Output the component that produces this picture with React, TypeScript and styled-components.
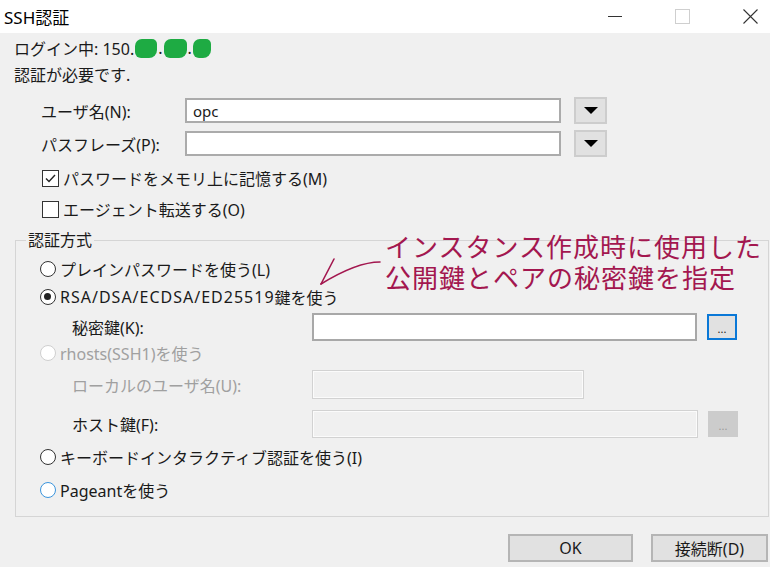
import styled, { createGlobalStyle } from "styled-components";

const GlobalStyle = createGlobalStyle`
  html, body {
    margin: 0;
    padding: 0;
    background: #f0f0f0;
  }
  body {
    font-family: "Noto Sans", "Noto Sans CJK JP", sans-serif;
  }
`;

const App = () => {
  return (
    <>
      <GlobalStyle />
      <Window>
        <TitleBar>
          <Title>SSH認証</Title>
          <Controls>
            <MinimizeIcon />
            <MaximizeIcon />
            <CloseIcon viewBox="0 0 15 15">
              <path d="M0.5 0.5 L14.5 14.5 M14.5 0.5 L0.5 14.5" />
            </CloseIcon>
          </Controls>
        </TitleBar>

        <Body>
          <InfoLine>
            ログイン中: 150.<Blob $w={22} />.<Blob $w={23} />.<Blob $w={18} />
          </InfoLine>
          <InfoLine>認証が必要です.</InfoLine>

          <FieldStack>
            <FieldRow>
              <FieldLabel>ユーザ名(N):</FieldLabel>
              <TextBox>opc</TextBox>
              <DropButton>
                <Triangle />
              </DropButton>
            </FieldRow>
            <FieldRow>
              <FieldLabel>パスフレーズ(P):</FieldLabel>
              <TextBox />
              <DropButton>
                <Triangle />
              </DropButton>
            </FieldRow>
          </FieldStack>

          <CheckStack>
            <CheckRow>
              <CheckBox>
                <svg viewBox="0 0 13 13" width="13" height="13">
                  <path d="M2 6.5 L5 9.5 L11 3" fill="none" stroke="#222" strokeWidth="1.4" />
                </svg>
              </CheckBox>
              パスワードをメモリ上に記憶する(M)
            </CheckRow>
            <CheckRow>
              <CheckBox />
              エージェント転送する(O)
            </CheckRow>
          </CheckStack>

          <Group>
            <Legend>認証方式</Legend>
            <RadioRow $mt={0}>
              <Radio />
              プレインパスワードを使う(L)
            </RadioRow>
            <RadioRow $mt={4}>
              <Radio $checked />
              <Wide>RSA/DSA/ECDSA/ED25519</Wide>鍵を使う
            </RadioRow>
            <KeyRow $mt={4} $h={28}>
              <KeyLabel>秘密鍵(K):</KeyLabel>
              <KeyInput $w={385} />
              <BrowseButton $focused>...</BrowseButton>
            </KeyRow>
            <RadioRow $mt={0} $disabled>
              <Radio $disabled />
              rhosts(SSH1)を使う
            </RadioRow>
            <KeyRow $mt={5} $h={29}>
              <KeyLabel $disabled>ローカルのユーザ名(U):</KeyLabel>
              <KeyInput $w={272} $disabled />
            </KeyRow>
            <KeyRow $mt={11} $h={28}>
              <KeyLabel>ホスト鍵(F):</KeyLabel>
              <KeyInput $w={386} $disabled />
              <BrowseButton $disabled>...</BrowseButton>
            </KeyRow>
            <RadioRow $mt={7}>
              <Radio />
              キーボードインタラクティブ認証を使う(I)
            </RadioRow>
            <RadioRow $mt={9}>
              <Radio $hover />
              Pageantを使う
            </RadioRow>
          </Group>

          <ButtonRow>
            <DialogButton $w={125}>OK</DialogButton>
            <DialogButton $w={117}>接続断(D)</DialogButton>
          </ButtonRow>
        </Body>

        <Note>
          <NoteLine>インスタンス作成時に使用した</NoteLine>
          <NoteLine>公開鍵とペアの秘密鍵を指定</NoteLine>
        </Note>
        <NoteArrow viewBox="0 0 70 40">
          <path d="M65 10 C 50 10, 32 16, 6 32" />
          <path d="M6 32 L 19 7" />
        </NoteArrow>
      </Window>
    </>
  );
};

export default App;

const Window = styled.div`
  position: relative;
  width: 770px;
  height: 567px;
  overflow: hidden;
  background: #f0f0f0;
  color: #1a1a1a;
  font-family: "Noto Sans", "Noto Sans CJK JP", sans-serif;
  font-size: 16px;
`;

const TitleBar = styled.div`
  display: flex;
  align-items: center;
  height: 33px;
  padding-left: 4px;
  background: #fff;
`;

const Title = styled.div`
  flex: 1;
  font-size: 17px;
  color: #000;
`;

const Controls = styled.div`
  display: flex;
  align-items: center;
  gap: 53px;
  padding-right: 12px;
`;

const MinimizeIcon = styled.div`
  width: 14px;
  height: 1px;
  background: #333;
`;

const MaximizeIcon = styled.div`
  width: 13px;
  height: 13px;
  border: 1px solid #cfcfcf;
`;

const CloseIcon = styled.svg`
  width: 15px;
  height: 15px;
  stroke: #333;
  stroke-width: 1.1;
  fill: none;
`;

const Body = styled.div`
  padding: 2px 0 0 14px;
`;

const InfoLine = styled.div`
  display: flex;
  align-items: center;
  height: 26px;
`;

const Blob = styled.span<{ $w: number }>`
  display: inline-block;
  width: ${({ $w }) => $w}px;
  height: 19px;
  margin: 0 1px;
  background: #1eab43;
  border-radius: 7px 5px 8px 6px;
`;

const FieldStack = styled.div`
  display: flex;
  flex-direction: column;
  gap: 6px;
  margin-top: 10px;
`;

const FieldRow = styled.div`
  display: flex;
  align-items: center;
  height: 27px;
  padding-left: 27px;
`;

const FieldLabel = styled.label`
  width: 144px;
`;

const TextBox = styled.div`
  display: flex;
  align-items: center;
  box-sizing: border-box;
  width: 376px;
  height: 25px;
  padding-left: 6px;
  background: #fff;
  border: 2px solid #ababab;
  font-size: 15px;
`;

const DropButton = styled.div`
  display: flex;
  align-items: center;
  justify-content: center;
  box-sizing: border-box;
  width: 33px;
  height: 27px;
  margin-left: 13px;
  background: #e1e1e1;
  border: 2px solid #cdcdcd;
`;

const Triangle = styled.div`
  width: 0;
  height: 0;
  border-left: 7px solid transparent;
  border-right: 7px solid transparent;
  border-top: 7px solid #000;
`;

const CheckStack = styled.div`
  display: flex;
  flex-direction: column;
  gap: 5px;
  margin-top: 8px;
`;

const CheckRow = styled.div`
  display: flex;
  align-items: center;
  height: 26px;
  padding-left: 28px;
`;

const CheckBox = styled.div`
  display: flex;
  align-items: center;
  justify-content: center;
  box-sizing: border-box;
  width: 17px;
  height: 17px;
  margin-right: 4px;
  background: #fff;
  border: 1.5px solid #333;
`;

const Group = styled.fieldset`
  box-sizing: border-box;
  width: 754px;
  margin: 9px 0 0 1px;
  padding: 8px 0 14px 24px;
  border: 1px solid #d5d5d5;
  display: flex;
  flex-direction: column;
`;

const Legend = styled.legend`
  padding: 0 2px;
  margin-left: -14px;
  line-height: 18px;
`;

const RadioRow = styled.div<{ $mt: number; $disabled?: boolean }>`
  display: flex;
  align-items: center;
  height: 24px;
  margin-top: ${({ $mt }) => $mt}px;
  color: ${({ $disabled }) => ($disabled ? "#a0a0a0" : "#1a1a1a")};
`;

const Wide = styled.span`
  letter-spacing: 1px;
`;

const Radio = styled.span<{ $checked?: boolean; $disabled?: boolean; $hover?: boolean }>`
  position: relative;
  box-sizing: border-box;
  width: 16px;
  height: 16px;
  margin-right: 4px;
  border-radius: 50%;
  background: #fff;
  border: 1.5px solid
    ${({ $disabled, $hover }) => ($disabled ? "#cfcfcf" : $hover ? "#3b95dd" : "#333")};

  &::after {
    content: "";
    display: ${({ $checked }) => ($checked ? "block" : "none")};
    position: absolute;
    left: 3px;
    top: 3px;
    width: 7px;
    height: 7px;
    border-radius: 50%;
    background: #222;
  }
`;

const KeyRow = styled.div<{ $mt: number; $h: number }>`
  display: flex;
  align-items: center;
  height: ${({ $h }) => $h}px;
  margin-top: ${({ $mt }) => $mt}px;
  padding-left: 32px;
`;

const KeyLabel = styled.label<{ $disabled?: boolean }>`
  width: 240px;
  color: ${({ $disabled }) => ($disabled ? "#a0a0a0" : "#1a1a1a")};
`;

const KeyInput = styled.div<{ $w: number; $disabled?: boolean }>`
  box-sizing: border-box;
  align-self: stretch;
  width: ${({ $w }) => $w}px;
  background: ${({ $disabled }) => ($disabled ? "#f0f0f0" : "#fff")};
  border: ${({ $disabled }) => ($disabled ? "1px solid #d2d2d2" : "2px solid #a8a8a8")};
  box-shadow: ${({ $disabled }) => ($disabled ? "inset 0 0 0 1px #fbfbfb" : "none")};
`;

const BrowseButton = styled.div<{ $focused?: boolean; $disabled?: boolean }>`
  display: flex;
  align-items: flex-end;
  justify-content: center;
  box-sizing: border-box;
  width: 30px;
  height: 26px;
  margin-left: 10px;
  padding-bottom: 4px;
  font-size: 11px;
  line-height: 11px;
  background: ${({ $disabled }) => ($disabled ? "#cccccc" : "#e1e1e1")};
  color: ${({ $disabled }) => ($disabled ? "#9a9a9a" : "#222")};
  border: 2px solid
    ${({ $focused, $disabled }) => ($focused ? "#0a78d7" : $disabled ? "#cccccc" : "#adadad")};
`;

const ButtonRow = styled.div`
  display: flex;
  justify-content: flex-end;
  gap: 18px;
  margin-top: 17px;
  padding-right: 2px;
`;

const DialogButton = styled.div<{ $w: number }>`
  display: flex;
  align-items: center;
  justify-content: center;
  box-sizing: border-box;
  width: ${({ $w }) => $w}px;
  height: 28px;
  background: #e1e1e1;
  border: 2px solid #b5b5b5;
`;

const Note = styled.div`
  position: absolute;
  left: 385px;
  top: 230px;
  font-family: "Noto Sans CJK JP", sans-serif;
  font-size: 26px;
  font-weight: 400;
  letter-spacing: 1px;
  color: #a3174f;
`;

const NoteLine = styled.div`
  height: 31px;
  line-height: 31px;
`;

const NoteArrow = styled.svg`
  position: absolute;
  left: 315px;
  top: 252px;
  width: 70px;
  height: 40px;
  fill: none;
  stroke: #a3174f;
  stroke-width: 1.6;
  stroke-linecap: round;
`;
